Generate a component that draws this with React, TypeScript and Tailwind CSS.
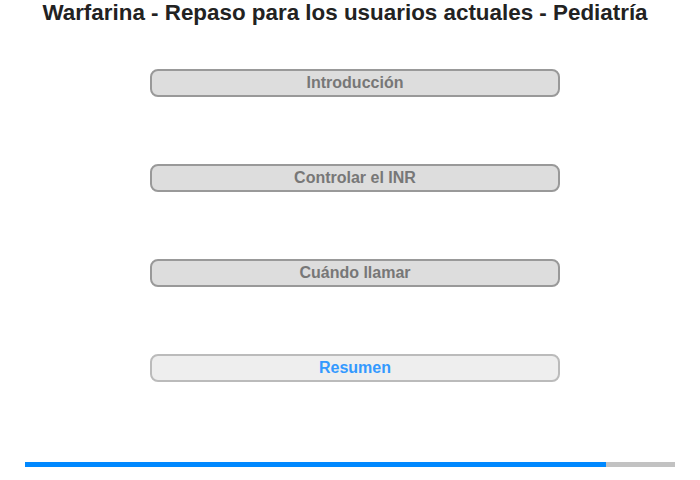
export default function App() {
  const items = ["Introducción", "Controlar el INR", "Cuándo llamar"];
  return (
    <div className="w-[700px] h-[480px] bg-white relative" style={{ fontFamily: '"Liberation Sans", Arial, sans-serif' }}>
      <h1 className="text-[22.4px] leading-[25px] font-bold text-[#222] text-center pr-[10px]">
        Warfarina - Repaso para los usuarios actuales - Pediatría
      </h1>
      <div className="flex flex-col items-center mt-[44px] gap-[67px] pl-[10px]">
        {items.map((t) => (
          <div key={t} className="w-[410px] h-[28px] rounded-[8px] border-2 border-[#999] bg-[#ddd] flex items-center justify-center text-[16px] font-bold text-[#777]">
            {t}
          </div>
        ))}
        <div className="w-[410px] h-[28px] rounded-[8px] border-2 border-[#bbb] bg-[#eee] flex items-center justify-center text-[16px] font-bold text-[#3399ff]">
          Resumen
        </div>
      </div>
      <div className="mx-[25px] mt-[80px] h-[5px] bg-[#c2c2c2] flex">
        <div className="h-full bg-[#0088ff] w-[581px]" />
      </div>
    </div>
  );
}
